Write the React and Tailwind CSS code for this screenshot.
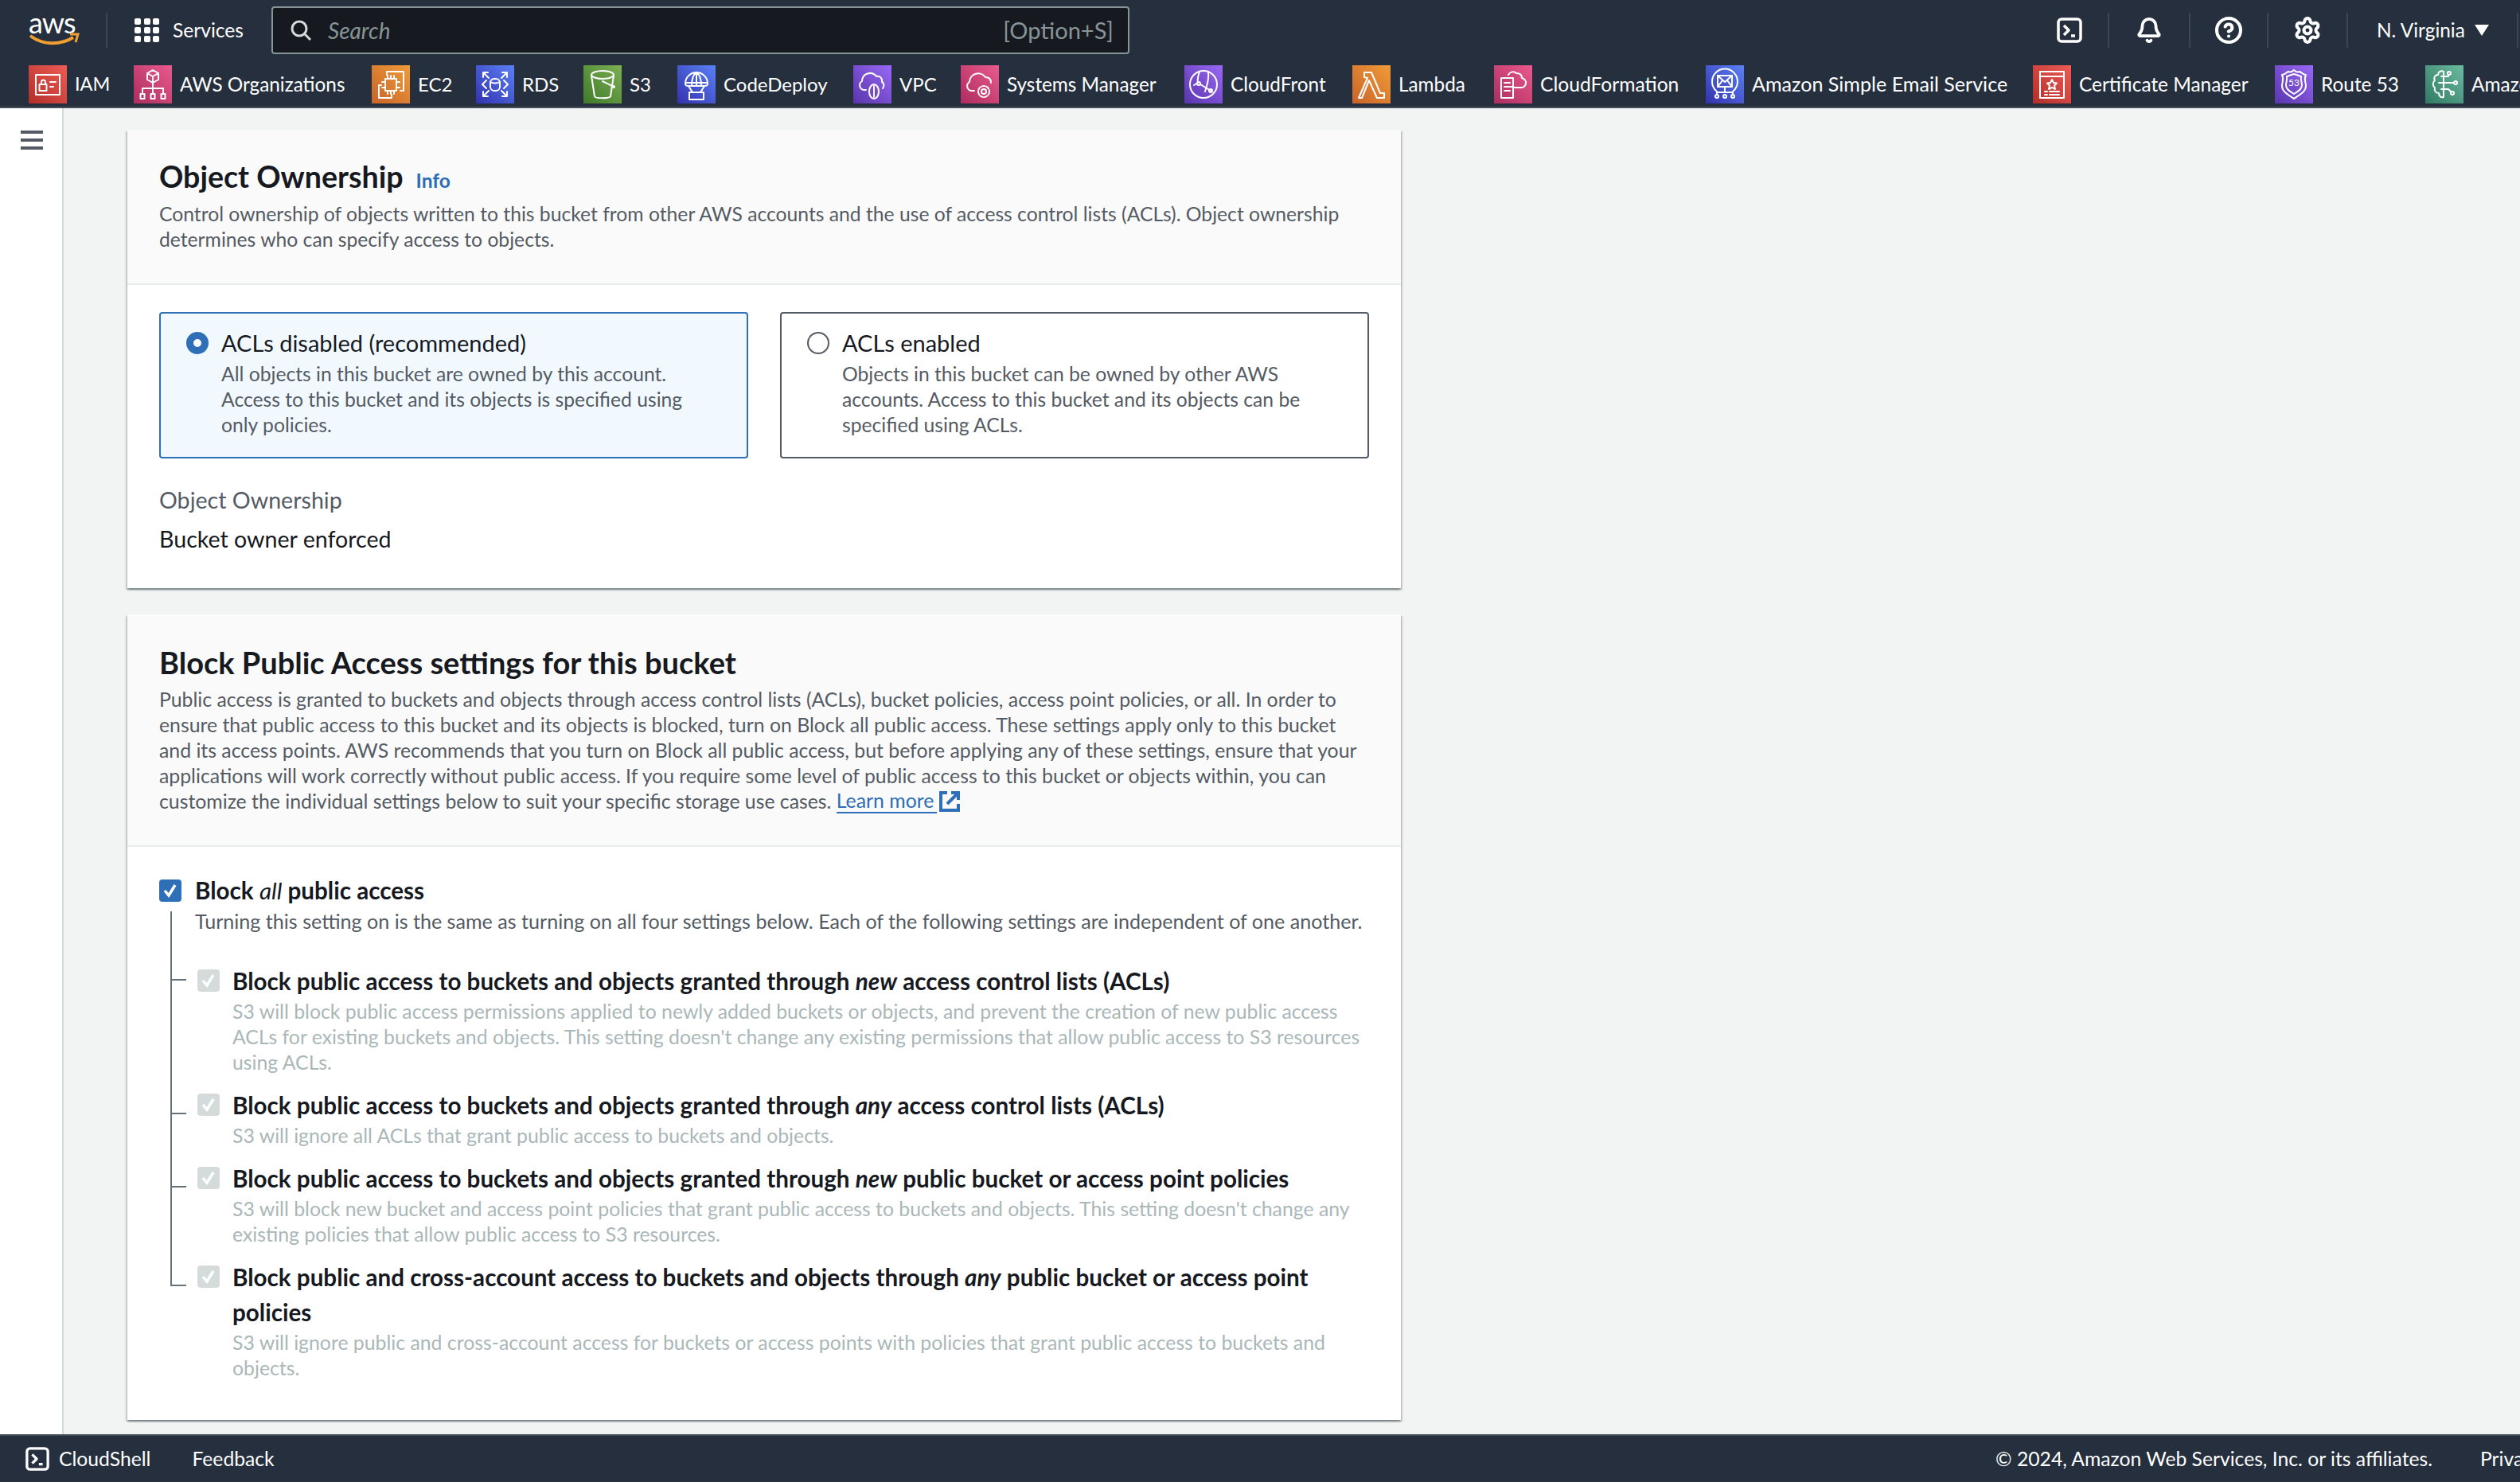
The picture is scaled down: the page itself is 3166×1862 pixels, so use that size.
import { Settings, Bell, CircleHelp } from 'lucide-react'

const strokeProps = { fill: 'none', stroke: 'white', strokeWidth: 2, strokeLinejoin: 'round', strokeLinecap: 'round' }

const services = [
  {
    name: 'IAM', bg: 'from-[#b32d2a] to-[#ee5c55]', width: 'w-[100px]', text: 'text-[23.500px]',
    icon: <><rect x="9" y="12" width="30" height="25" /><rect x="13.500" y="24" width="9" height="8" /><path d="M16 24v-3a2.500 2.500 0 0 1 5 0v3M27 21h7M27 27h4" /></>,
  },
  {
    name: 'AWS Organizations', bg: 'from-[#ad2c5e] to-[#ea5a8d]', width: 'w-[267px]', text: 'text-[24.300px]',
    icon: <><path d="M24 6l7 4v8l-7 4-7-4v-8zM17 10l7 4 7-4M24 14v8M24 22v7M11 36v-7h26v7M24 29v7" /><rect x="8.500" y="36" width="5" height="6" /><rect x="21.500" y="36" width="5" height="6" /><rect x="34.500" y="36" width="5" height="6" /></>,
  },
  {
    name: 'EC2', bg: 'from-[#c8642a] to-[#f09b38]', width: 'w-[99px]', text: 'text-[24px]',
    icon: <><path d="M19 12V8h21v24h-4M12 25H9v16h16v-4" /><rect x="17" y="17" width="14" height="15" /><path d="M20 13v4M24 13v4M28 13v4M20 32v4M24 32v4M28 32v4M13 21h4M13 28h4M31 21h4M31 28h4" /></>,
  },
  {
    name: 'RDS', bg: 'from-[#3431ae] to-[#5b80f6]', width: 'w-[103px]', text: 'text-[24px]',
    icon: <><path d="M9 15V9h6M39 15V9h-6M9 33v6h6M39 33v6h-6M9 9l7 7M39 9l-7 7M9 39l7-7M39 39l-7-7M13 19l-5 5 5 5M35 19l5 5-5 5" /><rect x="18" y="17" width="12" height="15" rx="5" /><path d="M18 21c3 2 9 2 12 0" /></>,
  },
  {
    name: 'S3', bg: 'from-[#3f7a2a] to-[#7db052]', width: 'w-[86px]', text: 'text-[24px]',
    icon: <><ellipse cx="24" cy="12" rx="14" ry="5" /><path d="M10 13l4 26c1 3 19 3 20 0l4-26M24 20l14 7" /><circle cx="38" cy="27" r="1" /></>,
  },
  {
    name: 'CodeDeploy', bg: 'from-[#3431ae] to-[#5b80f6]', width: 'w-[189px]', text: 'text-[24px]',
    icon: <><path d="M10 23a14 14 0 0 1 28 0c0 3-3 3-4 3H14c-1 0-4 0-4-3zM24 9v17M24 9c-5 3-6 9-6 17M24 9c5 3 6 9 6 17M10 22h28M14 26l5 8M34 26l-5 8" /><rect x="15" y="34" width="18" height="9" /></>,
  },
  {
    name: 'VPC', bg: 'from-[#5a35ad] to-[#9a68f5]', width: 'w-[103px]', text: 'text-[24px]',
    icon: <><path d="M16 31h-3a6 6 0 0 1-2-11 10 10 0 0 1 18-6c5-1 8 3 7 7 3 1 3 6 1 8" /><ellipse cx="26" cy="33" rx="6" ry="9" /><path d="M26 26v14" /></>,
  },
  {
    name: 'Systems Manager', bg: 'from-[#ad2c5e] to-[#ea5a8d]', width: 'w-[249px]', text: 'text-[24.300px]',
    icon: <><path d="M17 32h-4a6 6 0 0 1-2-11 11 11 0 0 1 20-6c5 0 7 3 7 7" /><circle cx="29" cy="33" r="3" /><circle cx="29" cy="33" r="7" strokeDasharray="4 2" /></>,
  },
  {
    name: 'CloudFront', bg: 'from-[#5a35ad] to-[#9a68f5]', width: 'w-[179px]', text: 'text-[24.300px]',
    icon: <><circle cx="24" cy="24" r="17" /><path d="M19 8c-2 6-3 10-2 14M17 22l-5 3M20 24l15 9M30 9c1 6 0 12-4 24" /><circle cx="18" cy="23" r="2" /><circle cx="33" cy="32" r="2" /></>,
  },
  {
    name: 'Lambda', bg: 'from-[#c8642a] to-[#f09b38]', width: 'w-[146px]', text: 'text-[24.300px]',
    icon: <path d="M15 9h9l11 26h5v6h-9L21 19l-9 22H8l11-25-4-1z" />,
  },
  {
    name: 'CloudFormation', bg: 'from-[#ad2c5e] to-[#ea5a8d]', width: 'w-[234px]', text: 'text-[24.600px]',
    icon: <><rect x="9" y="16" width="15" height="25" /><path d="M13 22h7M13 27h10M13 32h7M24 28h9a6 6 0 0 0 2-12c0-4-3-6-7-6-3-3-8-2-10 2" /></>,
  },
  {
    name: 'Amazon Simple Email Service', bg: 'from-[#3431ae] to-[#5b80f6]', width: 'w-[379px]', text: 'text-[25.100px]',
    icon: <><path d="M14 33a16 16 0 1 1 20 0" /><rect x="15" y="13" width="18" height="14" /><path d="M15 13l9 8 9-8M15 27l6-8M33 27l-6-8M24 27v7M14 34h20M14 34v3M34 34v3" /><circle cx="14" cy="39" r="2" /><circle cx="24" cy="39" r="2" /><circle cx="34" cy="39" r="2" /></>,
  },
  {
    name: 'Certificate Manager', bg: 'from-[#b32d2a] to-[#ee5c55]', width: 'w-[272px]', text: 'text-[24.400px]',
    icon: <><path d="M9 8h30v33H9zM9 14h30" /><path d="M24 18l2 4 4 .5-3 3 1 4.500-4-2.200-4 2.200 1-4.500-3-3 4-.5z" /><path d="M18 33h-3M33 33H21M18 37h-3M33 37H21" /></>,
  },
  {
    name: 'Route 53', bg: 'from-[#5a35ad] to-[#9a68f5]', width: 'w-[157px]', text: 'text-[24.400px]',
    icon: <><path d="M24 6c3 3 5 3 7 2l2 1c3 3 4 3 6 3-3 6 0 9 0 14 0 8-10 12-15 16-5-4-15-8-15-16 0-5 3-8 0-14 2 0 3 0 6-3l2-1c2 1 4 1 7-2z" /><path d="M24 11l9 3c-1 5 1 7 1 11 0 6-6 8-10 11-4-3-10-5-10-11 0-4 2-6 1-11z" /></>,
    label: '53',
  },
  {
    name: 'Amazon SageMaker', bg: 'from-[#2f7a63] to-[#6cbba0]', width: 'w-[300px]', text: 'text-[24.400px]',
    icon: <><path d="M23 8c-4-2-7 1-7 4-4 0-6 4-4 7-3 2-3 7 0 9-1 4 1 7 5 7 0 4 3 6 6 5zM23 14h-3M23 22h-6M23 30h-3M23 14h6v-2M23 22h13M23 30h6l3 3" /><circle cx="30" cy="10" r="2" /><circle cx="38" cy="22" r="2" /><circle cx="34" cy="35" r="2" /></>,
  },
]

const subOptions = [
  {
    tick: 'top-[19px]',
    title: <>Block public access to buckets and objects granted through <i>new</i> access control lists (ACLs)</>,
    lines: [
      'S3 will block public access permissions applied to newly added buckets or objects, and prevent the creation of new public access',
      "ACLs for existing buckets and objects. This setting doesn't change any existing permissions that allow public access to S3 resources",
      'using ACLs.',
    ],
  },
  {
    tick: 'top-[31px]',
    title: <>Block public access to buckets and objects granted through <i>any</i> access control lists (ACLs)</>,
    lines: ['S3 will ignore all ACLs that grant public access to buckets and objects.'],
  },
  {
    tick: 'top-[31px]',
    title: <>Block public access to buckets and objects granted through <i>new</i> public bucket or access point policies</>,
    lines: [
      "S3 will block new bucket and access point policies that grant public access to buckets and objects. This setting doesn't change any",
      'existing policies that allow public access to S3 resources.',
    ],
  },
  {
    tick: 'top-[31px]',
    title: <>Block public and cross-account access to buckets and objects through <i>any</i> public bucket or access point<br />policies</>,
    lines: [
      'S3 will ignore public and cross-account access for buckets or access points with policies that grant public access to buckets and',
      'objects.',
    ],
  },
]

const cardShadow = 'bg-white shadow-[0_2px_2px_0_rgba(0,28,36,0.35),2px_2px_2px_0_rgba(0,28,36,0.15),-2px_2px_2px_0_rgba(0,28,36,0.15)]'

function CheckBox({ disabled }) {
  return (
    <div className={`w-[28px] h-[28px] rounded-[4px] shrink-0 flex items-center justify-center ${disabled ? 'bg-[#d5dbdb]' : 'bg-[#2e6fb7]'}`}>
      <svg width="20" height="20" viewBox="0 0 20 20" fill="none" stroke="white" strokeWidth="3.500">
        <path d="M3 10l5 6 8-13" />
      </svg>
    </div>
  )
}

function ShellIcon({ size = 32 }) {
  return (
    <svg width={size} height={size} viewBox="0 0 32 32" fill="none" stroke="white" strokeWidth="3.500" strokeLinejoin="round">
      <rect x="2" y="2" width="28" height="28" rx="4" />
      <path d="M9 10l6 6-6 6M18 23h5" />
    </svg>
  )
}

function ServiceItem({ service }) {
  return (
    <div className={`flex items-center gap-[10px] shrink-0 ${service.width}`}>
      <div className={`relative w-[48px] h-[48px] shrink-0 bg-linear-to-tr ${service.bg}`}>
        <svg width="48" height="48" viewBox="0 0 48 48" {...strokeProps}>{service.icon}</svg>
        {service.label && <span className="absolute inset-0 flex items-center justify-center text-[12px] text-white pb-[4px]">{service.label}</span>}
      </div>
      <span className={`text-white whitespace-nowrap ${service.text}`}>{service.name}</span>
    </div>
  )
}

export default function App() {
  return (
    <div className="h-screen w-full overflow-hidden flex flex-col bg-[#f2f3f3] font-['Lato',sans-serif] text-[#16191f]">
      {/* top nav */}
      <header className="h-[136px] shrink-0 bg-[#252f3e] border-b-2 border-[#454d58]">
        <div className="h-[76px] flex items-center pl-[36px]">
          <div className="relative w-[64px] h-[44px] shrink-0">
            <span className="absolute left-0 top-[-10px] text-[36px] leading-[44px] text-white tracking-[-1px]">aws</span>
            <svg className="absolute left-0 top-[24px]" width="64" height="20" viewBox="0 0 64 20" fill="none" stroke="#f0a030" strokeWidth="4">
              <path d="M2 5c16 12 38 12 54 2" />
              <path d="M52 3h10l-3 10" strokeWidth="3" />
            </svg>
          </div>
          <div className="w-[2px] h-[44px] bg-[#3d4653] ml-[33px] mr-[34px]" />
          <div className="grid grid-cols-3 gap-[3px] w-[32px] shrink-0">
            {Array.from({ length: 9 }).map((_, i) => <div key={i} className="w-[8px] h-[8px] rounded-[2px] bg-white" />)}
          </div>
          <span className="text-[24.600px] text-white ml-[16px] w-[124px]">Services</span>
          <div className="w-[1078px] h-[60px] rounded-[4px] border-2 border-[#879596] bg-[#16191f] flex items-center pl-[21px] pr-[18px]">
            <svg width="28" height="28" viewBox="0 0 28 28" fill="none" stroke="#d5dbdb" strokeWidth="3">
              <circle cx="12" cy="12" r="9" />
              <path d="M18 18l8 8" />
            </svg>
            <span className="text-[28px] italic text-[#879596] ml-[20px]">Search</span>
            <span className="text-[29px] text-[#879596] ml-auto">[Option+S]</span>
          </div>
          <div className="ml-auto flex items-center h-[44px]">
            <div className="w-[100px] h-full flex items-center justify-center border-r-2 border-[#3d4653] pl-[2px]"><ShellIcon /></div>
            <div className="w-[102px] h-full flex items-center justify-center border-r-2 border-[#3d4653]"><Bell size={34} color="white" strokeWidth={2.7} /></div>
            <div className="w-[98px] h-full flex items-center justify-center border-r-2 border-[#3d4653]"><CircleHelp size={36} color="white" strokeWidth={2.7} /></div>
            <div className="w-[100px] h-full flex items-center justify-center border-r-2 border-[#3d4653]"><Settings size={36} color="white" strokeWidth={2.7} /></div>
            <div className="w-[214px] h-full flex items-center border-r-2 border-[#3d4653] pl-[36px] mr-[2px]">
              <span className="text-[24.400px] text-white">N. Virginia</span>
              <svg className="ml-[12px]" width="18" height="14" viewBox="0 0 18 14" fill="white"><path d="M0 0h18l-9 14z" /></svg>
            </div>
          </div>
        </div>
        <div className="h-[58px] pt-[6px] pl-[36px] flex items-start gap-[32px] overflow-hidden">
          {services.map((s) => <ServiceItem key={s.name} service={s} />)}
        </div>
      </header>

      <div className="flex-1 min-h-0 flex">
        {/* collapsed side nav */}
        <aside className="w-[80px] shrink-0 bg-white border-r-2 border-[#d5dbdb] pt-[28px] pl-[26px]">
          <div className="flex flex-col gap-[6px] w-[28px]">
            <div className="h-[4px] bg-[#545b64]" />
            <div className="h-[4px] bg-[#545b64]" />
            <div className="h-[4px] bg-[#545b64]" />
          </div>
        </aside>

        <main className="flex-1 min-w-0 pt-[27px] pl-[80px] overflow-hidden">
          <div className="w-[1600px] flex flex-col gap-[33px]">
            {/* object ownership */}
            <section className={cardShadow}>
              <div className="bg-[#fafafa] border-b-2 border-[#eaeded] px-[40px] pt-[37px] pb-[39px]">
                <div className="flex items-baseline gap-[16px] h-[44px]">
                  <h2 className="text-[37.600px] leading-[44px] font-bold">Object Ownership</h2>
                  <span className="text-[24.500px] font-bold text-[#2c6db5]">Info</span>
                </div>
                <div className="mt-[9px] text-[24.700px] leading-[32px] text-[#545b64] whitespace-nowrap">
                  <div>Control ownership of objects written to this bucket from other AWS accounts and the use of access control lists (ACLs). Object ownership</div>
                  <div>determines who can specify access to objects.</div>
                </div>
              </div>
              <div className="px-[40px] pt-[34px] pb-[42px]">
                <div className="grid grid-cols-2 gap-[40px]">
                  <div className="h-[184px] rounded-[4px] border-2 border-[#2e6fb7] bg-[#f1f9ff] flex gap-[16px] pl-[32px] pt-[21px]">
                    <div className="w-[28px] h-[28px] rounded-full border-[9px] border-[#2e6fb7] bg-white shrink-0 mt-[2px]" />
                    <div>
                      <div className="text-[29px] leading-[32px]">ACLs disabled (recommended)</div>
                      <div className="mt-[7px] text-[24.700px] leading-[32px] text-[#545b64] whitespace-nowrap">
                        <div>All objects in this bucket are owned by this account.</div>
                        <div>Access to this bucket and its objects is specified using</div>
                        <div>only policies.</div>
                      </div>
                    </div>
                  </div>
                  <div className="h-[184px] rounded-[4px] border-2 border-[#545b64] flex gap-[16px] pl-[32px] pt-[21px]">
                    <div className="w-[28px] h-[28px] rounded-full border-2 border-[#545b64] bg-white shrink-0 mt-[2px]" />
                    <div>
                      <div className="text-[29px] leading-[32px]">ACLs enabled</div>
                      <div className="mt-[7px] text-[24.700px] leading-[32px] text-[#545b64] whitespace-nowrap">
                        <div>Objects in this bucket can be owned by other AWS</div>
                        <div>accounts. Access to this bucket and its objects can be</div>
                        <div>specified using ACLs.</div>
                      </div>
                    </div>
                  </div>
                </div>
                <div className="mt-[32px] text-[28.600px] leading-[40px] text-[#545b64]">Object Ownership</div>
                <div className="mt-[9px] text-[28.600px] leading-[40px]">Bucket owner enforced</div>
              </div>
            </section>

            {/* block public access */}
            <section className={cardShadow}>
              <div className="bg-[#fafafa] border-b-2 border-[#eaeded] px-[40px] pt-[38px] pb-[39px]">
                <h2 className="text-[38px] leading-[44px] font-bold">Block Public Access settings for this bucket</h2>
                <div className="mt-[9px] text-[24.800px] leading-[32px] text-[#545b64] whitespace-nowrap">
                  <div>Public access is granted to buckets and objects through access control lists (ACLs), bucket policies, access point policies, or all. In order to</div>
                  <div>ensure that public access to this bucket and its objects is blocked, turn on Block all public access. These settings apply only to this bucket</div>
                  <div>and its access points. AWS recommends that you turn on Block all public access, but before applying any of these settings, ensure that your</div>
                  <div>applications will work correctly without public access. If you require some level of public access to this bucket or objects within, you can</div>
                  <div className="flex items-center">
                    <span>customize the individual settings below to suit your specific storage use cases.&nbsp;</span>
                    <span className="text-[#2c6db5] border-b-2 border-[#2c6db5] leading-[28px] pr-[4px]">Learn more</span>
                    <svg className="ml-[2px]" width="28" height="28" viewBox="0 0 28 28" fill="none" stroke="#2e6fb7" strokeWidth="4">
                      <path d="M11 3H3v22h22v-8M16 3h9v9M25 3L11 17" />
                    </svg>
                  </div>
                </div>
              </div>
              <div className="relative px-[40px] pt-[33px] pb-[49px]">
                <div className="absolute left-[54px] top-[81px] w-[2px] h-[471px] bg-[#687078]" />
                <div className="flex gap-[17px]">
                  <div className="mt-[8px]"><CheckBox /></div>
                  <div className="text-[29.600px] leading-[44px] font-bold">Block <i className="font-normal">all</i> public access</div>
                </div>
                <div className="ml-[45px] text-[25.100px] leading-[32px] text-[#545b64] whitespace-nowrap">
                  Turning this setting on is the same as turning on all four settings below. Each of the following settings are independent of one another.
                </div>
                <div className="ml-[48px] mt-[38px] flex flex-col gap-[16px]">
                  {subOptions.map((opt, i) => (
                    <div key={i} className="relative flex gap-[16px]">
                      <div className={`absolute left-[-33px] w-[19px] h-[2px] bg-[#687078] ${opt.tick}`} />
                      <div className="mt-[7px]"><CheckBox disabled /></div>
                      <div>
                        <div className="text-[29.600px] leading-[44px] font-bold whitespace-nowrap">{opt.title}</div>
                        <div className="text-[24.800px] leading-[32px] text-[#aab7b8] whitespace-nowrap">
                          {opt.lines.map((line) => <div key={line}>{line}</div>)}
                        </div>
                      </div>
                    </div>
                  ))}
                </div>
              </div>
            </section>
          </div>
        </main>
      </div>

      {/* footer */}
      <footer className="h-[60px] shrink-0 bg-[#252f3e] border-t-2 border-[#454d58] flex items-center pl-[32px] text-white text-[24.700px] overflow-hidden whitespace-nowrap">
        <ShellIcon size={30} />
        <span className="ml-[12px]">CloudShell</span>
        <span className="ml-[52px]">Feedback</span>
        <span className="ml-auto">© 2024, Amazon Web Services, Inc. or its affiliates.</span>
        <span className="ml-[60px] w-[50px] overflow-hidden shrink-0">Privacy</span>
      </footer>
    </div>
  )
}
